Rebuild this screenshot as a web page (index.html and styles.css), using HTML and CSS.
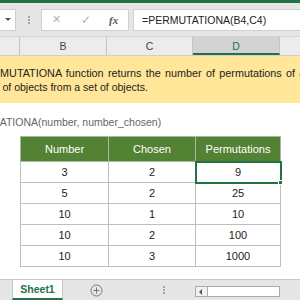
FILE: index.html
```html
<!DOCTYPE html>
<html lang="en">
<head>
  <meta charset="UTF-8">
  <link rel="stylesheet" href="styles.css">
  <title>PERMUTATIONA</title>
</head>
<body>
  <div class="titlebar"></div>

  <div class="formula-bar">
    <div class="name-box"><span class="caret"></span></div>
    <div class="grip"><i></i><i></i><i></i></div>
    <div class="fx-box">
      <span class="fx-cancel">&#x2715;</span>
      <span class="fx-enter">&#x2713;</span>
      <span class="fx-label">fx</span>
    </div>
    <div class="formula-input">=PERMUTATIONA(B4,C4)</div>
  </div>

  <div class="col-heads">
    <div class="col-head col-a"></div>
    <div class="col-head col-b">B</div>
    <div class="col-head col-c">C</div>
    <div class="col-head col-d active">D</div>
    <div class="col-head col-e"></div>
  </div>

  <div class="sheet">
    <div class="note">
      <span class="note-line first">The PERMUTATIONA function returns the number of permutations of a given</span>
      <span class="note-line second">number of objects from a set of objects.</span>
    </div>
    <div class="syntax">=PERMUTATIONA(number, number_chosen)</div>

    <table class="data">
      <tr class="head-row">
        <th>Number</th>
        <th>Chosen</th>
        <th>Permutations</th>
      </tr>
      <tr><td>3</td><td>2</td><td class="selected">9</td></tr>
      <tr><td>5</td><td>2</td><td>25</td></tr>
      <tr><td>10</td><td>1</td><td>10</td></tr>
      <tr><td>10</td><td>2</td><td>100</td></tr>
      <tr><td>10</td><td>3</td><td>1000</td></tr>
    </table>
  </div>

  <div class="tabs">
    <div class="tab-gap"></div>
    <div class="sheet-tab">Sheet1</div>
    <div class="add-sheet">
      <svg width="13" height="13" viewBox="0 0 13 13">
        <circle cx="6.5" cy="6.5" r="5.5" fill="none" stroke="#777" stroke-width="1"/>
        <path d="M6.5 3.5v6M3.5 6.5h6" stroke="#777" stroke-width="1"/>
      </svg>
    </div>
    <div class="tab-grip"><i></i><i></i><i></i></div>
    <div class="hscroll">
      <div class="hscroll-arrow"></div>
      <div class="hscroll-track"></div>
    </div>
  </div>
</body>
</html>
```

FILE: styles.css
```css
body {
  margin: 0;
  width: 300px;
  height: 300px;
  overflow: hidden;
  display: flex;
  flex-direction: column;
  font-family: "Liberation Sans", Arial, sans-serif;
  font-size: 10.5px;
  color: #222;
  background: #fff;
}

/* barra verde de arriba */
.titlebar {
  height: 3px;
  background: #217346;
}

/* barra de formulas */
.formula-bar {
  height: 34px;
  display: flex;
  align-items: center;
  background: #e6e6e6;
  border-bottom: 1px solid #d4d4d4;
  box-sizing: border-box;
}

.name-box {
  width: 16px;
  height: 22px;
  box-sizing: border-box;
  background: #fff;
  border: 1px solid #cfcfcf;
  border-left: none;
  display: flex;
  align-items: center;
  justify-content: center;
}

.caret {
  width: 0;
  height: 0;
  border-left: 3px solid transparent;
  border-right: 3px solid transparent;
  border-top: 3px solid #555;
}

.grip {
  width: 25px;
  display: flex;
  flex-direction: column;
  align-items: center;
  gap: 1px;
}

.grip i,
.tab-grip i {
  display: block;
  width: 2px;
  height: 2px;
  background: #a6a6a6;
}

.fx-box {
  width: 88px;
  height: 22px;
  box-sizing: border-box;
  background: #fff;
  border: 1px solid #cfcfcf;
  display: flex;
  align-items: center;
}

.fx-cancel {
  margin-left: 10px;
  width: 12px;
  font-size: 11px;
  color: #b4b4b4;
}

.fx-enter {
  margin-left: 17px;
  width: 12px;
  font-size: 12px;
  color: #b4b4b4;
}

.fx-label {
  margin-left: 16px;
  font-family: "Liberation Serif", serif;
  font-style: italic;
  font-weight: bold;
  font-size: 11px;
  color: #555;
}

.formula-input {
  flex: 1;
  height: 22px;
  margin-left: 4px;
  box-sizing: border-box;
  background: #fff;
  border: 1px solid #cfcfcf;
  border-right: none;
  padding-left: 8px;
  line-height: 20px;
  color: #222;
  white-space: nowrap;
  overflow: hidden;
}

/* cabeceras de columna */
.col-heads {
  height: 19px;
  display: flex;
  background: #ececec;
  border-bottom: 1px solid #cfcfcf;
  box-sizing: border-box;
}

.col-head {
  box-sizing: border-box;
  border-right: 1px solid #c4c4c4;
  text-align: center;
  line-height: 18px;
  color: #444;
}

.col-a { width: 20px; }
.col-b { width: 87px; }
.col-c { width: 86px; }
.col-d { width: 87px; }
.col-e { flex: 1; border-right: none; }

.col-head.active {
  background: #d3d3d3;
  color: #217346;
  border-bottom: 2px solid #217346;
}

/* hoja */
.sheet {
  flex: 1;
  overflow: hidden;
  background: #fff;
}

.note {
  height: 47px;
  box-sizing: border-box;
  padding-top: 10px;
  background: #ffe699;
  white-space: nowrap;
  overflow: hidden;
}

.note-line {
  display: block;
  line-height: 14px;
  color: #222;
}

.note-line.first {
  margin-left: -45px;
  font-size: 10.8px;
  word-spacing: 1.3px;
}

.note-line.second { margin-left: -36px; }

.syntax {
  margin-top: 12px;
  margin-left: -50px;
  line-height: 14px;
  color: #666;
  white-space: nowrap;
}

.data {
  margin-top: 7px;
  margin-left: 20px;
  width: 261px;
  border-collapse: collapse;
  table-layout: fixed;
  font-size: 11px;
}

.data th,
.data td {
  border: 1px solid #bfbfbf;
  text-align: center;
  padding: 0;
  font-weight: normal;
}

.data th:nth-child(1),
.data td:nth-child(1) { width: 87px; }
.data th:nth-child(2),
.data td:nth-child(2) { width: 86px; }

.data th {
  height: 24px;
  background: #548235;
  color: #fff;
  border-color: #a9b99c;
}

.data td {
  height: 20px;
  color: #222;
}

.data td.selected {
  position: relative;
  outline: 2px solid #217346;
  outline-offset: -1px;
}

.data td.selected::after {
  content: "";
  position: absolute;
  right: -3px;
  bottom: -3px;
  width: 5px;
  height: 5px;
  background: #217346;
  border: 1px solid #fff;
  box-sizing: border-box;
}

/* pestañas de abajo */
.tabs {
  height: 21px;
  flex-shrink: 0;
  display: flex;
  background: #e6e6e6;
  border-top: 1px solid #c8c8c8;
  box-sizing: border-box;
}

.tab-gap {
  width: 12px;
}

.sheet-tab {
  width: 51px;
  box-sizing: border-box;
  background: #fff;
  border-left: 1px solid #c8c8c8;
  border-right: 1px solid #c8c8c8;
  border-bottom: 2px solid #217346;
  text-align: center;
  line-height: 19px;
  font-weight: bold;
  color: #217346;
}

.add-sheet {
  width: 70px;
  display: flex;
  align-items: center;
  padding-left: 27px;
  box-sizing: border-box;
}

.add-sheet svg {
  display: block;
}

.tab-grip {
  width: 62px;
  display: flex;
  flex-direction: column;
  align-items: center;
  justify-content: center;
  gap: 1px;
}

.hscroll {
  width: 85px;
  height: 11px;
  margin-top: 6px;
  display: flex;
  box-sizing: border-box;
  border: 1px solid #ababab;
  background: #fff;
}

.hscroll-arrow {
  width: 12px;
  box-sizing: border-box;
  border-right: 1px solid #ababab;
  background: #f0f0f0;
  position: relative;
}

.hscroll-arrow::before {
  content: "";
  position: absolute;
  left: 3px;
  top: 2px;
  border-top: 3px solid transparent;
  border-bottom: 3px solid transparent;
  border-right: 3px solid #555;
}

.hscroll-track {
  flex: 1;
}
```
